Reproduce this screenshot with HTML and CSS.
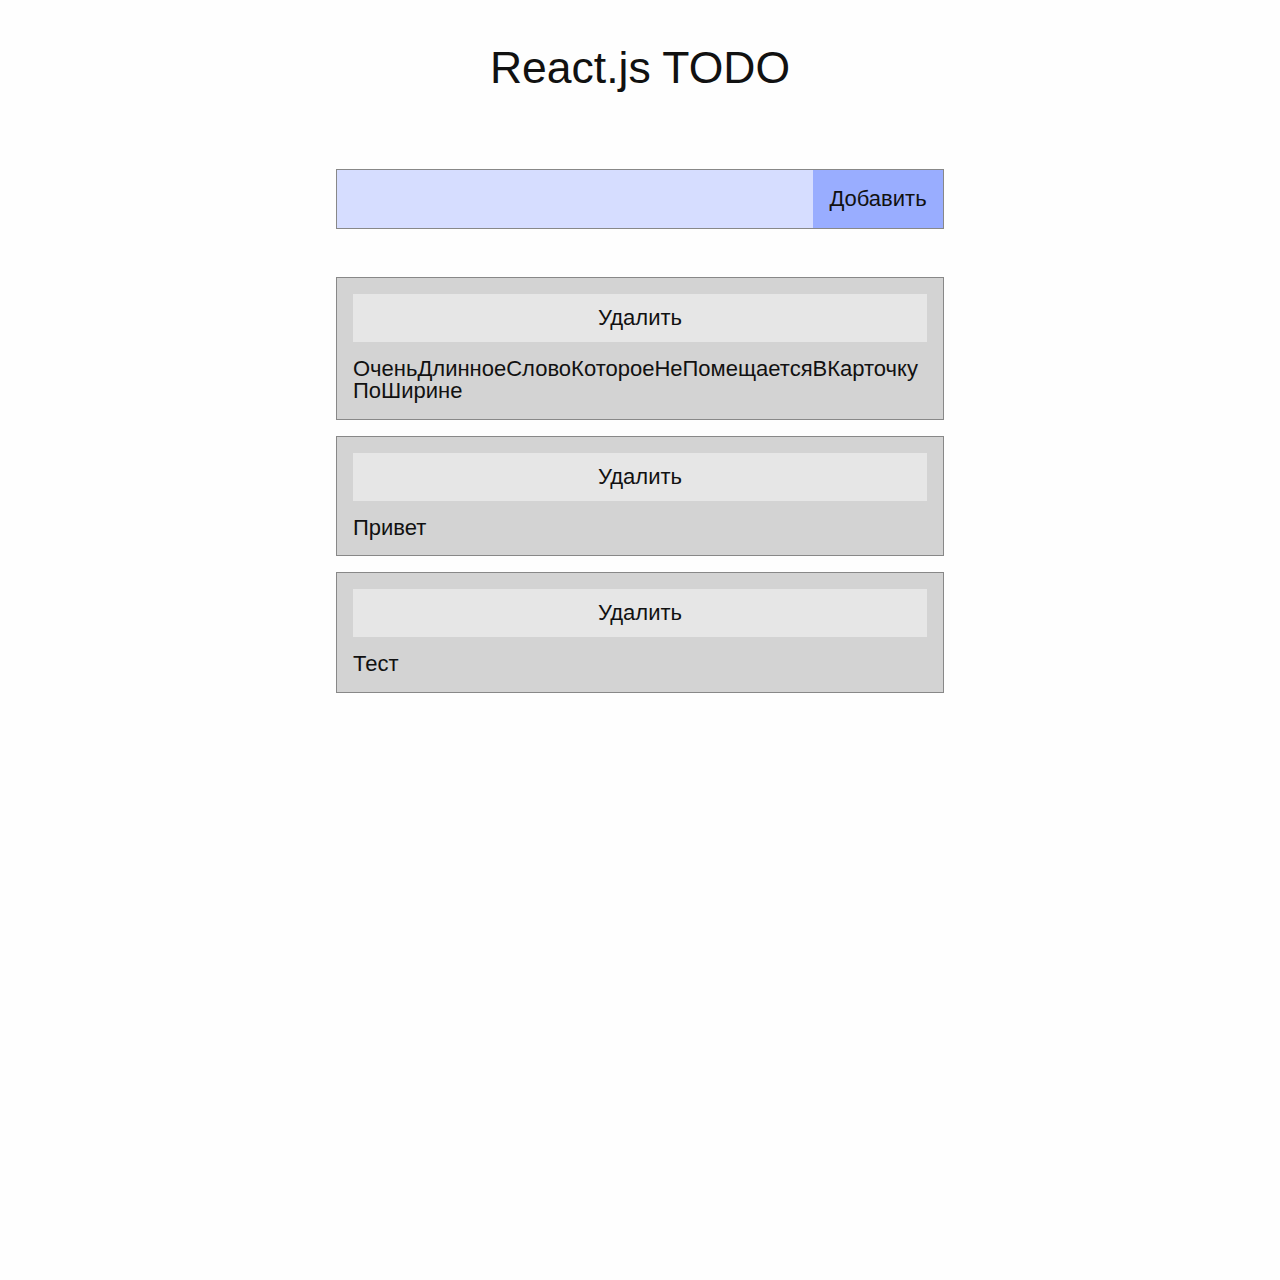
FILE: index.html
```html
<!DOCTYPE html>
<html lang="ru">
<head>
<meta charset="utf-8">
<title>React.js TODO</title>
<link rel="stylesheet" href="styles.css">
</head>
<body>
<main class="app">
  <h1 class="title">React.js TODO</h1>
  <form class="add-form">
    <input class="add-input" type="text">
    <button class="add-btn" type="button">Добавить</button>
  </form>
  <ul class="list">
    <li class="card">
      <button class="del-btn" type="button">Удалить</button>
      <p class="card-text">ОченьДлинноеСловоКотороеНеПомещаетсяВКарточкуПоШирине</p>
    </li>
    <li class="card">
      <button class="del-btn" type="button">Удалить</button>
      <p class="card-text">Привет</p>
    </li>
    <li class="card">
      <button class="del-btn" type="button">Удалить</button>
      <p class="card-text">Тест</p>
    </li>
  </ul>
</main>
</body>
</html>
```

FILE: styles.css
```css
html, body {
  margin: 0;
  padding: 0;
  background: #fefefe;
  color: #111;
  font-family: "Liberation Sans", Arial, sans-serif;
}

.app {
  width: 608px;
  margin: 0 auto;
  display: flex;
  flex-direction: column;
}

.title {
  margin: 43px 0 76px;
  font-size: 44.5px;
  line-height: 50px;
  font-weight: normal;
  text-align: center;
}

.add-form {
  display: flex;
  height: 60px;
  border: 1px solid #888;
  box-sizing: border-box;
  margin: 0 0 48px;
}

.add-input {
  flex: 1;
  border: none;
  margin: 0;
  padding: 0 12px;
  background: #d6ddff;
  font: 22px "Liberation Sans", Arial, sans-serif;
  outline: none;
}

.add-btn {
  width: 130px;
  border: none;
  margin: 0;
  padding: 0;
  background: #99adff;
  color: #111;
  font: 22px "Liberation Sans", Arial, sans-serif;
}

.list {
  list-style: none;
  margin: 0;
  padding: 0;
  display: flex;
  flex-direction: column;
  gap: 16px;
}

.card {
  background: #d3d3d3;
  border: 1px solid #888;
  padding: 16px;
  display: flex;
  flex-direction: column;
  gap: 16px;
}

.del-btn {
  height: 48px;
  border: none;
  margin: 0;
  background: #e6e6e6;
  color: #111;
  font: 22px "Liberation Sans", Arial, sans-serif;
}

.card-text {
  margin: 0;
  font-size: 22px;
  line-height: 22.4px;
  overflow-wrap: anywhere;
  word-break: break-all;
}
```
